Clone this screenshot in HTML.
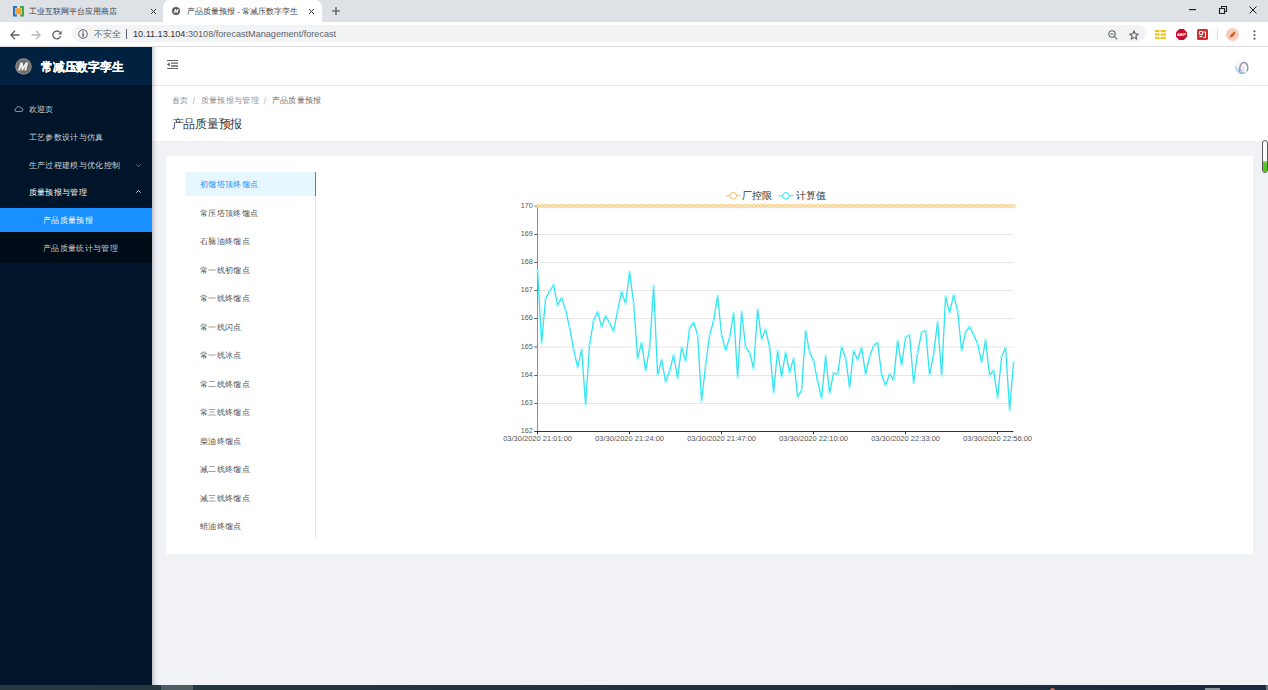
<!DOCTYPE html>
<html><head><meta charset="utf-8">
<style>
*{margin:0;padding:0;box-sizing:border-box}
html,body{width:1268px;height:690px;overflow:hidden;background:#f0f2f5;font-family:"Liberation Sans",sans-serif;position:relative}
.a{position:absolute;white-space:nowrap}
svg{position:absolute;overflow:visible}
#tabbar{left:0;top:0;width:1268px;height:22px;background:#dee1e6}
#tab2{left:163px;top:0;width:159px;height:22px;background:#fff;border-radius:7px 7px 0 0}
#addr{left:0;top:22px;width:1268px;height:25px;background:#fff;border-bottom:1px solid #dadce0}
#omni{left:72px;top:24.6px;width:1074px;height:17.8px;background:#f1f3f4;border-radius:9px}
#side{left:0;top:47px;width:152px;height:638px;background:#001529}
#logo{left:0;top:47px;width:152px;height:38px;background:#002140}
#header{left:152px;top:47px;width:1116px;height:39px;background:#fff;border-bottom:1px solid #e8e8e8}
#crumb{left:152px;top:86px;width:1116px;height:55px;background:#fff}
#card{left:166px;top:156px;width:1087px;height:398px;background:#fff}
#task{left:0;top:685px;width:1268px;height:5px;background:linear-gradient(to right,#25393e,#22343e 40%,#1b2a3e)}
.menu{color:rgba(255,255,255,.8);letter-spacing:.35px;font-size:8px;line-height:10px}
.crumbt{color:rgba(0,0,0,.5);letter-spacing:.35px;font-size:8px;line-height:10px}
.item{letter-spacing:.35px;font-size:8px;line-height:10px;color:rgba(0,0,0,.72)}
</style></head><body>
<!-- browser chrome -->
<div id="tabbar" class="a"></div>
<div id="tab2" class="a"></div>
<div id="addr" class="a"></div>
<div id="omni" class="a"></div>
<!-- tab1 -->
<svg style="left:13px;top:6px" width="11" height="10.5" viewBox="0 0 11 10.5">
 <path d="M0 0h4v2H2.2v6.5H4v2H0z" fill="#1f78c8"/>
 <path d="M11 0H7v2h1.8v6.5H7v2h4z" fill="#3aab4b"/>
 <rect x="2.6" y="2.2" width="5.8" height="6.1" fill="#f2a33a"/>
</svg>
<div class="a" style="left:29px;top:6px;font-size:8px;line-height:11px;color:#3c4043">工业互联网平台应用商店</div>
<svg style="left:150px;top:7.8px" width="7" height="7" viewBox="0 0 7 7"><path d="M1 1l5 5M6 1L1 6" stroke="#3c4043" stroke-width="1"/></svg>
<!-- tab2 -->
<svg style="left:172px;top:6.6px" width="8" height="8" viewBox="0 0 8 8"><circle cx="4" cy="4" r="4" fill="#5a5a5a"/><path d="M1.6 6L3 2h1l.2 2 1.4-2h1L5.8 6H4.9l.6-2.3L4 6H3.5L3.3 3.7 2.5 6z" fill="#fff"/></svg>
<div class="a" style="left:187px;top:6px;font-size:8.1px;line-height:11px;color:#3c4043">产品质量预报 - 常减压数字孪生</div>
<svg style="left:307.8px;top:7.5px" width="7" height="7" viewBox="0 0 7 7"><path d="M1 1l5 5M6 1L1 6" stroke="#3c4043" stroke-width="1"/></svg>
<svg style="left:332px;top:7px" width="8" height="8" viewBox="0 0 8 8"><path d="M4 0v8M0 4h8" stroke="#3c4043" stroke-width="1.1"/></svg>
<!-- window controls -->
<svg style="left:1189px;top:9px" width="7" height="1"><rect width="7" height="1.2" fill="#202124"/></svg>
<svg style="left:1219px;top:6px" width="8" height="8" viewBox="0 0 8 8"><path d="M.5 2.5h5v5h-5z" fill="none" stroke="#202124" stroke-width="1.1"/><path d="M2.5 2.5V.5h5v5h-2" fill="none" stroke="#202124" stroke-width="1.1"/></svg>
<svg style="left:1249px;top:6px" width="8" height="8" viewBox="0 0 8 8"><path d="M.5.5l7 7M7.5.5l-7 7" stroke="#202124" stroke-width="1"/></svg>
<!-- nav buttons -->
<svg style="left:10px;top:29.5px" width="10" height="10" viewBox="0 0 10 10"><path d="M9.5 5H1M5 .8L.9 5 5 9.2" fill="none" stroke="#5f6368" stroke-width="1.3"/></svg>
<svg style="left:31px;top:29.5px" width="10" height="10" viewBox="0 0 10 10"><path d="M.5 5H9M5 .8L9.1 5 5 9.2" fill="none" stroke="#b9bbbe" stroke-width="1.3"/></svg>
<svg style="left:52px;top:29.5px" width="10" height="10" viewBox="0 0 10 10"><path d="M8.6 5.8A3.9 3.9 0 1 1 7.6 2.2" fill="none" stroke="#5f6368" stroke-width="1.3"/><path d="M9.6.8v3.6H6z" fill="#5f6368"/></svg>
<!-- omnibox content -->
<svg style="left:78px;top:29px" width="10" height="10" viewBox="0 0 10 10"><circle cx="5" cy="5" r="4.3" fill="none" stroke="#5f6368" stroke-width="1"/><rect x="4.4" y="4.3" width="1.3" height="3.4" fill="#4a4e52"/><rect x="4.4" y="2.3" width="1.3" height="1.3" fill="#4a4e52"/></svg>
<div class="a" style="left:93.5px;top:28.5px;font-size:9px;line-height:11px;color:#5f6368">不安全</div>
<div class="a" style="left:126px;top:29px;width:1px;height:10px;background:#5f6368"></div>
<div class="a" style="left:133px;top:29.2px;font-size:9.1px;line-height:11px;color:#5f6368"><span style="color:#303134">10.11.13.104</span>:30108/forecastManagement/forecast</div>
<svg style="left:1108px;top:30px" width="10" height="10" viewBox="0 0 10 10"><circle cx="4" cy="4" r="3.2" fill="none" stroke="#5f6368" stroke-width="1.1"/><path d="M6.3 6.3L9.3 9.3M2.3 4h3.4" stroke="#5f6368" stroke-width="1.1"/></svg>
<svg style="left:1129px;top:29.5px" width="10" height="10" viewBox="0 0 10 10"><path d="M5 .8l1.2 2.9 3.1.3-2.4 2 .8 3.1L5 7.4 2.3 9.1l.8-3.1-2.4-2 3.1-.3z" fill="none" stroke="#5f6368" stroke-width="1.1" stroke-linejoin="round"/></svg>
<svg style="left:1155px;top:29.5px" width="11" height="9" viewBox="0 0 11 9"><g fill="#f2c318"><rect x="0" y="0" width="4.5" height="2.2"/><rect x="5.5" y="0" width="5.5" height="2.2"/><rect x="0" y="3.4" width="4.5" height="2.2"/><rect x="5.5" y="3.4" width="5.5" height="2.2"/><rect x="0" y="6.8" width="4.5" height="2.2"/><rect x="5.5" y="6.8" width="5.5" height="2.2"/></g></svg>
<svg style="left:1176px;top:28.5px" width="11" height="11" viewBox="0 0 11 11"><path d="M3.2 0h4.6L11 3.2v4.6L7.8 11H3.2L0 7.8V3.2z" fill="#c8102e"/><text x="5.5" y="7.2" font-size="4.2" font-weight="bold" fill="#fff" text-anchor="middle" font-family="Liberation Sans">ABP</text></svg>
<svg style="left:1197px;top:28.5px" width="11" height="11" viewBox="0 0 11 11"><rect width="11" height="11" rx="1.5" fill="#d32f2f"/><path d="M2.5 2.5h3v3h-3zM6.5 3h2v5.5h-2M2.5 7.5h3" fill="none" stroke="#fff" stroke-width="1"/></svg>
<div class="a" style="left:1217px;top:29px;width:1px;height:11px;background:#dadce0"></div>
<svg style="left:1225.5px;top:28px" width="13" height="13" viewBox="0 0 13 13"><circle cx="6.5" cy="6.5" r="6.5" fill="#f3cdbd"/><path d="M3.5 10L5 6.5 8.5 3.5 9.5 5 7 8.5z" fill="#d9541e"/></svg>
<svg style="left:1252.5px;top:30px" width="3" height="10" viewBox="0 0 3 10"><circle cx="1.5" cy="1.3" r="1.1" fill="#5f6368"/><circle cx="1.5" cy="5" r="1.1" fill="#5f6368"/><circle cx="1.5" cy="8.7" r="1.1" fill="#5f6368"/></svg>

<!-- app -->
<div id="side" class="a"></div>
<div id="logo" class="a"></div>
<svg style="left:15px;top:58px" width="17" height="17" viewBox="0 0 17 17"><circle cx="8.5" cy="8.5" r="8.3" fill="#8a8a8a"/><circle cx="8.5" cy="8.5" r="7" fill="#6e6e6e"/><path d="M3 12.5L5.3 4.5h2.3l.6 4 2.4-4h2.5l-1.8 8h-2l1-4.3-2.5 4.3H6.6l-.4-4.3-1.2 4.3z" fill="#f2f2f2"/></svg>
<div class="a" style="left:41px;top:59.8px;transform:scaleX(.98);transform-origin:0 0;font-size:12px;line-height:14px;color:#fff;font-weight:bold;-webkit-text-stroke:.2px #fff">常减压数字孪生</div>
<svg style="left:14px;top:106px" width="9" height="6" viewBox="0 0 9 6"><path d="M2 5.5h5.2a1.6 1.6 0 0 0 .2-3.2A2.9 2.9 0 0 0 2 2.6 1.5 1.5 0 0 0 2 5.5z" fill="none" stroke="rgba(255,255,255,.65)" stroke-width=".8"/></svg>
<div class="a menu" style="left:28.6px;top:105.0px">欢迎页</div>
<div class="a menu" style="left:28.6px;top:133.2px">工艺参数设计与仿真</div>
<div class="a menu" style="left:28.6px;top:161.0px">生产过程建模与优化控制</div>
<svg style="left:136px;top:163.5px" width="5" height="3" viewBox="0 0 5 3"><path d="M.3.3L2.5 2.6 4.7.3" fill="none" stroke="rgba(255,255,255,.5)" stroke-width=".7"/></svg>
<div class="a menu" style="left:28.6px;top:187.5px;color:#fff">质量预报与管理</div>
<svg style="left:136px;top:190px" width="5" height="3" viewBox="0 0 5 3"><path d="M.3 2.7L2.5.4 4.7 2.7" fill="none" stroke="#fff" stroke-width=".8"/></svg>
<div class="a" style="left:0;top:232px;width:152px;height:30.5px;background:#000c17"></div>
<div class="a" style="left:0;top:207.6px;width:152px;height:24.4px;background:#1890ff"></div>
<div class="a menu" style="left:42.9px;top:216.3px;color:#fff">产品质量预报</div>
<div class="a menu" style="left:42.9px;top:244.0px">产品质量统计与管理</div>

<div id="header" class="a"></div>
<svg style="left:167px;top:60px" width="11" height="9" viewBox="0 0 11 9"><path d="M0 .5h11M0 8.5h11" stroke="#555" stroke-width=".9"/><path d="M4 3.1h7M4 6h7" stroke="#666" stroke-width="1.3"/><path d="M0 4.5L2.6 2.6v3.8z" fill="#555"/></svg>
<svg style="left:1234.8px;top:59.8px" width="14" height="14" viewBox="0 0 14 14"><defs><clipPath id="av"><circle cx="7" cy="7" r="7"/></clipPath></defs><g clip-path="url(#av)"><rect width="14" height="14" fill="#f3f8fb"/><path d="M0 5c2.5 1 3.5 4 4 9H0z" fill="#b9e0f0"/><path d="M4.3 12.5c.2-5 .8-9.5 4-10s4.8 3 4.5 6.5-1 5-1.6 5.5" fill="none" stroke="#a98faa" stroke-width="1.6"/><path d="M6.8 5.5c1.5-.3 2.8.8 2.8 3s-.8 3.5-1.8 3.5-1.5-2-1-6.5z" fill="#f1e4ec"/><path d="M5.5 9c.5 1.5 1 3 .5 5" stroke="#8d7ba8" stroke-width=".8" fill="none"/><path d="M2 14c2-2 6-2.5 10-1v1z" fill="#6cc0d2"/></g></svg>
<div id="crumb" class="a"></div>
<div class="a crumbt" style="left:171.7px;top:96.0px">首页</div>
<div class="a crumbt" style="left:192.6px;top:95.5px;font-size:9.5px;color:rgba(0,0,0,.35)">/</div>
<div class="a crumbt" style="left:200.5px;top:96.0px">质量预报与管理</div>
<div class="a crumbt" style="left:263.7px;top:95.5px;font-size:9.5px;color:rgba(0,0,0,.35)">/</div>
<div class="a crumbt" style="left:271.6px;top:96.0px;color:rgba(0,0,0,.65)">产品质量预报</div>
<div class="a" style="left:171.5px;top:116.8px;letter-spacing:-.24px;font-size:12px;line-height:14px;color:rgba(0,0,0,.85)">产品质量预报</div>

<div id="card" class="a"></div>
<div class="a" style="left:315px;top:172.2px;width:1px;height:366.5px;background:#e8e8e8"></div>
<div class="a" style="left:185.7px;top:172.2px;width:130.4px;height:23.8px;background:#e6f7ff;border-right:1.6px solid #1890ff"></div>
<div class="a item" style="left:200px;top:180.0px;color:#1890ff">初馏塔顶终馏点</div>
<div class="a item" style="left:200px;top:208.5px;color:rgba(0,0,0,.75)">常压塔顶终馏点</div>
<div class="a item" style="left:200px;top:237.0px;color:rgba(0,0,0,.75)">石脑油终馏点</div>
<div class="a item" style="left:200px;top:265.5px;color:rgba(0,0,0,.75)">常一线初馏点</div>
<div class="a item" style="left:200px;top:294.0px;color:rgba(0,0,0,.75)">常一线终馏点</div>
<div class="a item" style="left:200px;top:322.5px;color:rgba(0,0,0,.75)">常一线闪点</div>
<div class="a item" style="left:200px;top:351.0px;color:rgba(0,0,0,.75)">常一线冰点</div>
<div class="a item" style="left:200px;top:379.5px;color:rgba(0,0,0,.75)">常二线终馏点</div>
<div class="a item" style="left:200px;top:408.0px;color:rgba(0,0,0,.75)">常三线终馏点</div>
<div class="a item" style="left:200px;top:436.5px;color:rgba(0,0,0,.75)">柴油终馏点</div>
<div class="a item" style="left:200px;top:465.0px;color:rgba(0,0,0,.75)">减二线终馏点</div>
<div class="a item" style="left:200px;top:493.5px;color:rgba(0,0,0,.75)">减三线终馏点</div>
<div class="a item" style="left:200px;top:522.0px;color:rgba(0,0,0,.75)">蜡油终馏点</div>

<svg style="left:0;top:0" width="1268" height="690">
 <g stroke="#e6e6e6" stroke-width="1"><line x1="538" y1="234.5" x2="1013.3" y2="234.5"/><line x1="538" y1="262.5" x2="1013.3" y2="262.5"/><line x1="538" y1="290.5" x2="1013.3" y2="290.5"/><line x1="538" y1="318.5" x2="1013.3" y2="318.5"/><line x1="538" y1="347" x2="1013.3" y2="347"/><line x1="538" y1="375.5" x2="1013.3" y2="375.5"/><line x1="538" y1="403.5" x2="1013.3" y2="403.5"/></g>
 <g stroke="#555" stroke-width="1"><line x1="534.4" y1="206.1" x2="537.5" y2="206.1"/><line x1="534.4" y1="234.5" x2="537.5" y2="234.5"/><line x1="534.4" y1="262.5" x2="537.5" y2="262.5"/><line x1="534.4" y1="290.5" x2="537.5" y2="290.5"/><line x1="534.4" y1="318.5" x2="537.5" y2="318.5"/><line x1="534.4" y1="347" x2="537.5" y2="347"/><line x1="534.4" y1="375.5" x2="537.5" y2="375.5"/><line x1="534.4" y1="403.5" x2="537.5" y2="403.5"/><line x1="534.4" y1="431.5" x2="537.5" y2="431.5"/></g>
 <line x1="537.5" y1="206" x2="537.5" y2="431.5" stroke="#8c8c8c" stroke-width="1"/>
 <line x1="534.4" y1="431.5" x2="1013.3" y2="431.5" stroke="#333" stroke-width="1.2"/>
 <g stroke="#333" stroke-width="1"><line x1="537.5" y1="431.5" x2="537.5" y2="434.2"/><line x1="629.5" y1="431.5" x2="629.5" y2="434.2"/><line x1="721.5" y1="431.5" x2="721.5" y2="434.2"/><line x1="813.5" y1="431.5" x2="813.5" y2="434.2"/><line x1="905.5" y1="431.5" x2="905.5" y2="434.2"/><line x1="997.5" y1="431.5" x2="997.5" y2="434.2"/></g>
 <g font-family="Liberation Sans" font-size="7.2" fill="#555" text-anchor="end"><text x="532.8" y="207.5">170</text><text x="532.8" y="235.7">169</text><text x="532.8" y="263.9">168</text><text x="532.8" y="292.1">167</text><text x="532.8" y="320.3">166</text><text x="532.8" y="348.5">165</text><text x="532.8" y="376.7">164</text><text x="532.8" y="404.9">163</text><text x="532.8" y="433.1">162</text></g>
 <g font-family="Liberation Sans" font-size="7.5" fill="#555" text-anchor="middle"><text x="537.6" y="441.3">03/30/2020 21:01:00</text><text x="629.6" y="441.3">03/30/2020 21:24:00</text><text x="721.6" y="441.3">03/30/2020 21:47:00</text><text x="813.6" y="441.3">03/30/2020 22:10:00</text><text x="905.6" y="441.3">03/30/2020 22:33:00</text><text x="997.6" y="441.3">03/30/2020 22:56:00</text></g>
 <line x1="537.6" y1="206.1" x2="1012.4" y2="206.1" stroke="#e8b060" stroke-width=".9"/>
 <g fill="#fff6dc" fill-opacity=".6" stroke="#f3bd6a" stroke-width=".7"><circle cx="537.6" cy="206.1" r="1.8"/><circle cx="541.6" cy="206.1" r="1.8"/><circle cx="545.6" cy="206.1" r="1.8"/><circle cx="549.6" cy="206.1" r="1.8"/><circle cx="553.6" cy="206.1" r="1.8"/><circle cx="557.6" cy="206.1" r="1.8"/><circle cx="561.6" cy="206.1" r="1.8"/><circle cx="565.6" cy="206.1" r="1.8"/><circle cx="569.6" cy="206.1" r="1.8"/><circle cx="573.6" cy="206.1" r="1.8"/><circle cx="577.6" cy="206.1" r="1.8"/><circle cx="581.6" cy="206.1" r="1.8"/><circle cx="585.6" cy="206.1" r="1.8"/><circle cx="589.6" cy="206.1" r="1.8"/><circle cx="593.6" cy="206.1" r="1.8"/><circle cx="597.6" cy="206.1" r="1.8"/><circle cx="601.6" cy="206.1" r="1.8"/><circle cx="605.6" cy="206.1" r="1.8"/><circle cx="609.6" cy="206.1" r="1.8"/><circle cx="613.6" cy="206.1" r="1.8"/><circle cx="617.6" cy="206.1" r="1.8"/><circle cx="621.6" cy="206.1" r="1.8"/><circle cx="625.6" cy="206.1" r="1.8"/><circle cx="629.6" cy="206.1" r="1.8"/><circle cx="633.6" cy="206.1" r="1.8"/><circle cx="637.6" cy="206.1" r="1.8"/><circle cx="641.6" cy="206.1" r="1.8"/><circle cx="645.6" cy="206.1" r="1.8"/><circle cx="649.6" cy="206.1" r="1.8"/><circle cx="653.6" cy="206.1" r="1.8"/><circle cx="657.6" cy="206.1" r="1.8"/><circle cx="661.6" cy="206.1" r="1.8"/><circle cx="665.6" cy="206.1" r="1.8"/><circle cx="669.6" cy="206.1" r="1.8"/><circle cx="673.6" cy="206.1" r="1.8"/><circle cx="677.6" cy="206.1" r="1.8"/><circle cx="681.6" cy="206.1" r="1.8"/><circle cx="685.6" cy="206.1" r="1.8"/><circle cx="689.6" cy="206.1" r="1.8"/><circle cx="693.6" cy="206.1" r="1.8"/><circle cx="697.6" cy="206.1" r="1.8"/><circle cx="701.6" cy="206.1" r="1.8"/><circle cx="705.6" cy="206.1" r="1.8"/><circle cx="709.6" cy="206.1" r="1.8"/><circle cx="713.6" cy="206.1" r="1.8"/><circle cx="717.6" cy="206.1" r="1.8"/><circle cx="721.6" cy="206.1" r="1.8"/><circle cx="725.6" cy="206.1" r="1.8"/><circle cx="729.6" cy="206.1" r="1.8"/><circle cx="733.6" cy="206.1" r="1.8"/><circle cx="737.6" cy="206.1" r="1.8"/><circle cx="741.6" cy="206.1" r="1.8"/><circle cx="745.6" cy="206.1" r="1.8"/><circle cx="749.6" cy="206.1" r="1.8"/><circle cx="753.6" cy="206.1" r="1.8"/><circle cx="757.6" cy="206.1" r="1.8"/><circle cx="761.6" cy="206.1" r="1.8"/><circle cx="765.6" cy="206.1" r="1.8"/><circle cx="769.6" cy="206.1" r="1.8"/><circle cx="773.6" cy="206.1" r="1.8"/><circle cx="777.6" cy="206.1" r="1.8"/><circle cx="781.6" cy="206.1" r="1.8"/><circle cx="785.6" cy="206.1" r="1.8"/><circle cx="789.6" cy="206.1" r="1.8"/><circle cx="793.6" cy="206.1" r="1.8"/><circle cx="797.6" cy="206.1" r="1.8"/><circle cx="801.6" cy="206.1" r="1.8"/><circle cx="805.6" cy="206.1" r="1.8"/><circle cx="809.6" cy="206.1" r="1.8"/><circle cx="813.6" cy="206.1" r="1.8"/><circle cx="817.6" cy="206.1" r="1.8"/><circle cx="821.6" cy="206.1" r="1.8"/><circle cx="825.6" cy="206.1" r="1.8"/><circle cx="829.6" cy="206.1" r="1.8"/><circle cx="833.6" cy="206.1" r="1.8"/><circle cx="837.6" cy="206.1" r="1.8"/><circle cx="841.6" cy="206.1" r="1.8"/><circle cx="845.6" cy="206.1" r="1.8"/><circle cx="849.6" cy="206.1" r="1.8"/><circle cx="853.6" cy="206.1" r="1.8"/><circle cx="857.6" cy="206.1" r="1.8"/><circle cx="861.6" cy="206.1" r="1.8"/><circle cx="865.6" cy="206.1" r="1.8"/><circle cx="869.6" cy="206.1" r="1.8"/><circle cx="873.6" cy="206.1" r="1.8"/><circle cx="877.6" cy="206.1" r="1.8"/><circle cx="881.6" cy="206.1" r="1.8"/><circle cx="885.6" cy="206.1" r="1.8"/><circle cx="889.6" cy="206.1" r="1.8"/><circle cx="893.6" cy="206.1" r="1.8"/><circle cx="897.6" cy="206.1" r="1.8"/><circle cx="901.6" cy="206.1" r="1.8"/><circle cx="905.6" cy="206.1" r="1.8"/><circle cx="909.6" cy="206.1" r="1.8"/><circle cx="913.6" cy="206.1" r="1.8"/><circle cx="917.6" cy="206.1" r="1.8"/><circle cx="921.6" cy="206.1" r="1.8"/><circle cx="925.6" cy="206.1" r="1.8"/><circle cx="929.6" cy="206.1" r="1.8"/><circle cx="933.6" cy="206.1" r="1.8"/><circle cx="937.6" cy="206.1" r="1.8"/><circle cx="941.6" cy="206.1" r="1.8"/><circle cx="945.6" cy="206.1" r="1.8"/><circle cx="949.6" cy="206.1" r="1.8"/><circle cx="953.6" cy="206.1" r="1.8"/><circle cx="957.6" cy="206.1" r="1.8"/><circle cx="961.6" cy="206.1" r="1.8"/><circle cx="965.6" cy="206.1" r="1.8"/><circle cx="969.6" cy="206.1" r="1.8"/><circle cx="973.6" cy="206.1" r="1.8"/><circle cx="977.6" cy="206.1" r="1.8"/><circle cx="981.6" cy="206.1" r="1.8"/><circle cx="985.6" cy="206.1" r="1.8"/><circle cx="989.6" cy="206.1" r="1.8"/><circle cx="993.6" cy="206.1" r="1.8"/><circle cx="997.6" cy="206.1" r="1.8"/><circle cx="1001.6" cy="206.1" r="1.8"/><circle cx="1005.6" cy="206.1" r="1.8"/><circle cx="1009.6" cy="206.1" r="1.8"/><circle cx="1013.6" cy="206.1" r="1.8"/></g>
 <polyline points="537.6,270.8 541.6,342.6 545.6,298.5 549.6,291.3 553.6,285.0 557.6,305.5 561.6,297.9 565.6,309.9 569.6,327.6 573.6,349.6 577.6,367.2 581.6,349.6 585.6,404.4 589.6,344.5 593.6,320.6 597.6,311.8 601.6,326.9 605.6,315.8 609.6,323.1 613.6,331.3 617.6,310.5 621.6,291.6 625.6,303.6 629.6,272.0 633.6,303.0 637.6,358.4 641.6,342.6 645.6,370.4 649.6,348.3 653.6,286.3 657.6,374.8 661.6,359.7 665.6,381.7 669.6,371.0 673.6,355.2 677.6,378.0 681.6,347.3 685.6,360.9 689.6,328.0 693.6,322.5 697.6,334.7 701.6,400.7 705.6,365.3 709.6,335.4 713.6,320.6 717.6,296.0 721.6,335.0 725.6,350.2 729.6,337.6 733.6,313.0 737.6,377.0 741.6,312.0 745.6,347.0 749.6,352.7 753.6,368.5 757.6,309.5 761.6,339.0 765.6,329.4 769.6,347.0 773.6,392.5 777.6,350.8 781.6,376.7 785.6,352.5 789.6,372.3 793.6,358.4 797.6,396.9 801.6,390.3 805.6,331.0 809.6,352.1 813.6,360.9 817.6,381.1 821.6,398.1 825.6,356.2 829.6,393.1 833.6,372.8 837.6,374.3 841.6,347.0 845.6,358.0 849.6,387.4 853.6,350.8 857.6,359.7 861.6,347.7 865.6,374.2 869.6,356.5 873.6,345.8 877.6,342.6 881.6,374.2 885.6,385.5 889.6,373.9 893.6,379.8 897.6,340.7 901.6,365.3 905.6,337.0 909.6,335.1 913.6,383.0 917.6,352.7 921.6,332.5 925.6,330.5 929.6,374.8 933.6,354.0 937.6,321.9 941.6,375.4 945.6,296.6 949.6,312.5 953.6,295.1 957.6,310.6 961.6,350.3 965.6,331.6 969.6,327.0 973.6,334.6 977.6,343.7 981.6,362.1 985.6,340.1 989.6,375.5 993.6,370.4 997.6,397.7 1001.6,356.5 1005.6,347.8 1009.6,409.9 1013.6,362.3" fill="none" stroke="#2ee5f0" stroke-width="1.3" stroke-linejoin="round"/>
 <g fill="#fff" stroke="#2ee5f0" stroke-width=".5"><circle cx="537.6" cy="270.8" r="1"/><circle cx="541.6" cy="342.6" r="1"/><circle cx="545.6" cy="298.5" r="1"/><circle cx="549.6" cy="291.3" r="1"/><circle cx="553.6" cy="285.0" r="1"/><circle cx="557.6" cy="305.5" r="1"/><circle cx="561.6" cy="297.9" r="1"/><circle cx="565.6" cy="309.9" r="1"/><circle cx="569.6" cy="327.6" r="1"/><circle cx="573.6" cy="349.6" r="1"/><circle cx="577.6" cy="367.2" r="1"/><circle cx="581.6" cy="349.6" r="1"/><circle cx="585.6" cy="404.4" r="1"/><circle cx="589.6" cy="344.5" r="1"/><circle cx="593.6" cy="320.6" r="1"/><circle cx="597.6" cy="311.8" r="1"/><circle cx="601.6" cy="326.9" r="1"/><circle cx="605.6" cy="315.8" r="1"/><circle cx="609.6" cy="323.1" r="1"/><circle cx="613.6" cy="331.3" r="1"/><circle cx="617.6" cy="310.5" r="1"/><circle cx="621.6" cy="291.6" r="1"/><circle cx="625.6" cy="303.6" r="1"/><circle cx="629.6" cy="272.0" r="1"/><circle cx="633.6" cy="303.0" r="1"/><circle cx="637.6" cy="358.4" r="1"/><circle cx="641.6" cy="342.6" r="1"/><circle cx="645.6" cy="370.4" r="1"/><circle cx="649.6" cy="348.3" r="1"/><circle cx="653.6" cy="286.3" r="1"/><circle cx="657.6" cy="374.8" r="1"/><circle cx="661.6" cy="359.7" r="1"/><circle cx="665.6" cy="381.7" r="1"/><circle cx="669.6" cy="371.0" r="1"/><circle cx="673.6" cy="355.2" r="1"/><circle cx="677.6" cy="378.0" r="1"/><circle cx="681.6" cy="347.3" r="1"/><circle cx="685.6" cy="360.9" r="1"/><circle cx="689.6" cy="328.0" r="1"/><circle cx="693.6" cy="322.5" r="1"/><circle cx="697.6" cy="334.7" r="1"/><circle cx="701.6" cy="400.7" r="1"/><circle cx="705.6" cy="365.3" r="1"/><circle cx="709.6" cy="335.4" r="1"/><circle cx="713.6" cy="320.6" r="1"/><circle cx="717.6" cy="296.0" r="1"/><circle cx="721.6" cy="335.0" r="1"/><circle cx="725.6" cy="350.2" r="1"/><circle cx="729.6" cy="337.6" r="1"/><circle cx="733.6" cy="313.0" r="1"/><circle cx="737.6" cy="377.0" r="1"/><circle cx="741.6" cy="312.0" r="1"/><circle cx="745.6" cy="347.0" r="1"/><circle cx="749.6" cy="352.7" r="1"/><circle cx="753.6" cy="368.5" r="1"/><circle cx="757.6" cy="309.5" r="1"/><circle cx="761.6" cy="339.0" r="1"/><circle cx="765.6" cy="329.4" r="1"/><circle cx="769.6" cy="347.0" r="1"/><circle cx="773.6" cy="392.5" r="1"/><circle cx="777.6" cy="350.8" r="1"/><circle cx="781.6" cy="376.7" r="1"/><circle cx="785.6" cy="352.5" r="1"/><circle cx="789.6" cy="372.3" r="1"/><circle cx="793.6" cy="358.4" r="1"/><circle cx="797.6" cy="396.9" r="1"/><circle cx="801.6" cy="390.3" r="1"/><circle cx="805.6" cy="331.0" r="1"/><circle cx="809.6" cy="352.1" r="1"/><circle cx="813.6" cy="360.9" r="1"/><circle cx="817.6" cy="381.1" r="1"/><circle cx="821.6" cy="398.1" r="1"/><circle cx="825.6" cy="356.2" r="1"/><circle cx="829.6" cy="393.1" r="1"/><circle cx="833.6" cy="372.8" r="1"/><circle cx="837.6" cy="374.3" r="1"/><circle cx="841.6" cy="347.0" r="1"/><circle cx="845.6" cy="358.0" r="1"/><circle cx="849.6" cy="387.4" r="1"/><circle cx="853.6" cy="350.8" r="1"/><circle cx="857.6" cy="359.7" r="1"/><circle cx="861.6" cy="347.7" r="1"/><circle cx="865.6" cy="374.2" r="1"/><circle cx="869.6" cy="356.5" r="1"/><circle cx="873.6" cy="345.8" r="1"/><circle cx="877.6" cy="342.6" r="1"/><circle cx="881.6" cy="374.2" r="1"/><circle cx="885.6" cy="385.5" r="1"/><circle cx="889.6" cy="373.9" r="1"/><circle cx="893.6" cy="379.8" r="1"/><circle cx="897.6" cy="340.7" r="1"/><circle cx="901.6" cy="365.3" r="1"/><circle cx="905.6" cy="337.0" r="1"/><circle cx="909.6" cy="335.1" r="1"/><circle cx="913.6" cy="383.0" r="1"/><circle cx="917.6" cy="352.7" r="1"/><circle cx="921.6" cy="332.5" r="1"/><circle cx="925.6" cy="330.5" r="1"/><circle cx="929.6" cy="374.8" r="1"/><circle cx="933.6" cy="354.0" r="1"/><circle cx="937.6" cy="321.9" r="1"/><circle cx="941.6" cy="375.4" r="1"/><circle cx="945.6" cy="296.6" r="1"/><circle cx="949.6" cy="312.5" r="1"/><circle cx="953.6" cy="295.1" r="1"/><circle cx="957.6" cy="310.6" r="1"/><circle cx="961.6" cy="350.3" r="1"/><circle cx="965.6" cy="331.6" r="1"/><circle cx="969.6" cy="327.0" r="1"/><circle cx="973.6" cy="334.6" r="1"/><circle cx="977.6" cy="343.7" r="1"/><circle cx="981.6" cy="362.1" r="1"/><circle cx="985.6" cy="340.1" r="1"/><circle cx="989.6" cy="375.5" r="1"/><circle cx="993.6" cy="370.4" r="1"/><circle cx="997.6" cy="397.7" r="1"/><circle cx="1001.6" cy="356.5" r="1"/><circle cx="1005.6" cy="347.8" r="1"/><circle cx="1009.6" cy="409.9" r="1"/><circle cx="1013.6" cy="362.3" r="1"/></g>
 <g>
  <line x1="725.9" y1="195.8" x2="740.5" y2="195.8" stroke="#f3bd6a" stroke-width="1"/>
  <circle cx="733.2" cy="195.8" r="3.3" fill="#fff" stroke="#f3bd6a" stroke-width="1"/>
  <line x1="778.4" y1="195.8" x2="793.5" y2="195.8" stroke="#2ee5f0" stroke-width="1"/>
  <circle cx="785.9" cy="195.8" r="3.3" fill="#fff" stroke="#2ee5f0" stroke-width="1"/>
 </g>
</svg>
<div class="a" style="left:742.3px;top:189.5px;font-size:9.8px;line-height:12px;color:#333">厂控限</div>
<div class="a" style="left:795.8px;top:189.5px;font-size:9.8px;line-height:12px;color:#333">计算值</div>
<!-- scrollbar widget -->
<div class="a" style="left:1261.8px;top:140px;width:6.2px;height:32.8px;border:1.3px solid #5a5a5a;border-radius:3px;background:#fbfbfb"></div>
<div class="a" style="left:1263.3px;top:161.3px;width:3.3px;height:10.3px;background:linear-gradient(#8ee06a,#52c61e 30%);border-radius:0 0 1.5px 1.5px"></div>
<div class="a" style="left:152px;top:47px;width:6px;height:638px;background:linear-gradient(to right,rgba(0,21,41,.22),rgba(0,21,41,.06) 50%,rgba(0,21,41,0))"></div>
<div id="task" class="a"></div>
<div class="a" style="left:161px;top:685px;width:32px;height:5px;background:#4f5d62"></div>
<div class="a" style="left:1050px;top:687.5px;width:5px;height:5px;border-radius:50%;background:#c9655f"></div>
<div class="a" style="left:1205px;top:687.5px;width:15px;height:3px;background:#8a96a0"></div>
<div class="a" style="left:1266px;top:685px;width:2px;height:5px;background:#6a7680"></div>
</body></html>
